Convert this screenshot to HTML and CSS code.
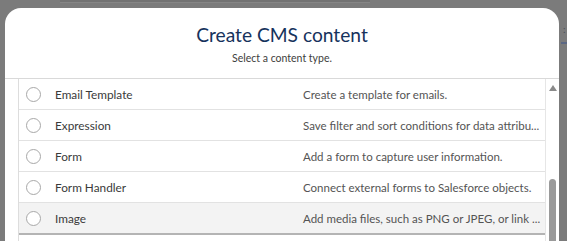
FILE: index.html
```html
<!DOCTYPE html>
<html lang="en">
<head>
    <meta charset="UTF-8">
    <meta name="viewport" content="width=device-width, initial-scale=1.0">
    <title>Create CMS content</title>
    <link rel="stylesheet" href="styles.css">
</head>
<body>
    <div id="backdrop">
        <div class="searchBar"></div>
        <div class="pageEdge">
            <span class="pageMark">:</span>
            <span class="pageTab"></span>
        </div>
    </div>
    <div id="modal">
        <div class="modalHeader">
            <h1>Create CMS content</h1>
            <p>Select a content type.</p>
        </div>
        <div class="modalBody">
            <div class="typeList">
                <label class="typeRow">
                    <span class="radio"></span>
                    <span class="typeName">Email Template</span>
                    <span class="typeDesc">Create a template for emails.</span>
                </label>
                <label class="typeRow">
                    <span class="radio"></span>
                    <span class="typeName">Expression</span>
                    <span class="typeDesc">Save filter and sort conditions for data attribu...</span>
                </label>
                <label class="typeRow">
                    <span class="radio"></span>
                    <span class="typeName">Form</span>
                    <span class="typeDesc">Add a form to capture user information.</span>
                </label>
                <label class="typeRow">
                    <span class="radio"></span>
                    <span class="typeName">Form Handler</span>
                    <span class="typeDesc">Connect external forms to Salesforce objects.</span>
                </label>
                <label class="typeRow hovered">
                    <span class="radio"></span>
                    <span class="typeName">Image</span>
                    <span class="typeDesc">Add media files, such as PNG or JPEG, or link ...</span>
                </label>
            </div>
            <div class="scrollbar">
                <span class="scrollUp"></span>
                <span class="scrollThumb"></span>
            </div>
        </div>
    </div>
</body>
</html>
```

FILE: styles.css
```css
body {
    margin: 0;
    padding: 0;
    background-color: #7b7b7b; /* dimmed page behind the modal */
    font-family: Lato, "Open Sans", sans-serif;
    height: 241px;
    overflow: hidden;
    position: relative;
}
.searchBar {
    margin-left: 60px;
    width: 310px;
    height: 2px;
    background-color: #727272;
    border-bottom: 1px solid #858585;
}
.pageEdge {
    margin-left: 561px;
    padding-top: 20px;
    display: flex;
    flex-direction: column;
}
.pageMark {
    font-size: 10px;
    line-height: 12px;
    color: #4a4f58;
    padding-left: 2px;
}
.pageTab {
    margin-top: 7px;
    height: 2px;
    background-color: #5b6784;
}
#modal {
    position: absolute;
    top: 8px;
    left: 5px;
    width: 554px;
    height: 240px;
    background-color: #fff;
    border-radius: 16px 16px 0 0;
    overflow: hidden;
}
.modalHeader {
    height: 70px;
    border-bottom: 1px solid #d9d9d9;
    text-align: center;
    color: #16325c;
}
.modalHeader h1 {
    margin: 0;
    padding-top: 14px;
    font-size: 19.2px;
    font-weight: 400;
    line-height: 26px;
}
.modalHeader p {
    margin: 2px 0 0;
    font-size: 10.5px;
    line-height: 16px;
    color: #3e3e3c;
}
.modalBody {
    display: flex;
    padding-left: 13px;
    height: 171px;
}
.typeList {
    flex: 1;
    border-left: 1px solid #dddddd;
    min-width: 0;
}
.typeRow {
    display: flex;
    align-items: center;
    height: 30px;
    border-bottom: 1px solid #e2e2e2;
    font-size: 11.8px;
    color: #3a3a3a;
}
.typeRow.hovered {
    background-color: #f3f3f3;
    border-bottom: 2px solid #b4b4b4;
}
.radio {
    width: 13px;
    height: 13px;
    border: 1px solid #a8a8a8;
    border-radius: 50%;
    margin-left: 7px;
    flex: none;
    background-color: #fff;
}
.typeName {
    width: 248px;
    margin-left: 14px;
    flex: none;
}
.typeDesc {
    font-size: 11.5px;
    color: #545454;
    white-space: nowrap;
}
.scrollbar {
    width: 13px;
    flex: none;
    border-left: 1px solid #e6e6e6;
    display: flex;
    flex-direction: column;
    align-items: center;
}
.scrollUp {
    margin-top: 6px;
    width: 0;
    height: 0;
    border-left: 4px solid transparent;
    border-right: 4px solid transparent;
    border-bottom: 6px solid #8a8a8a;
}
.scrollThumb {
    margin-top: 88px;
    width: 7px;
    height: 80px;
    border-radius: 4px 4px 0 0;
    background-color: #9a9a9a;
}
```
